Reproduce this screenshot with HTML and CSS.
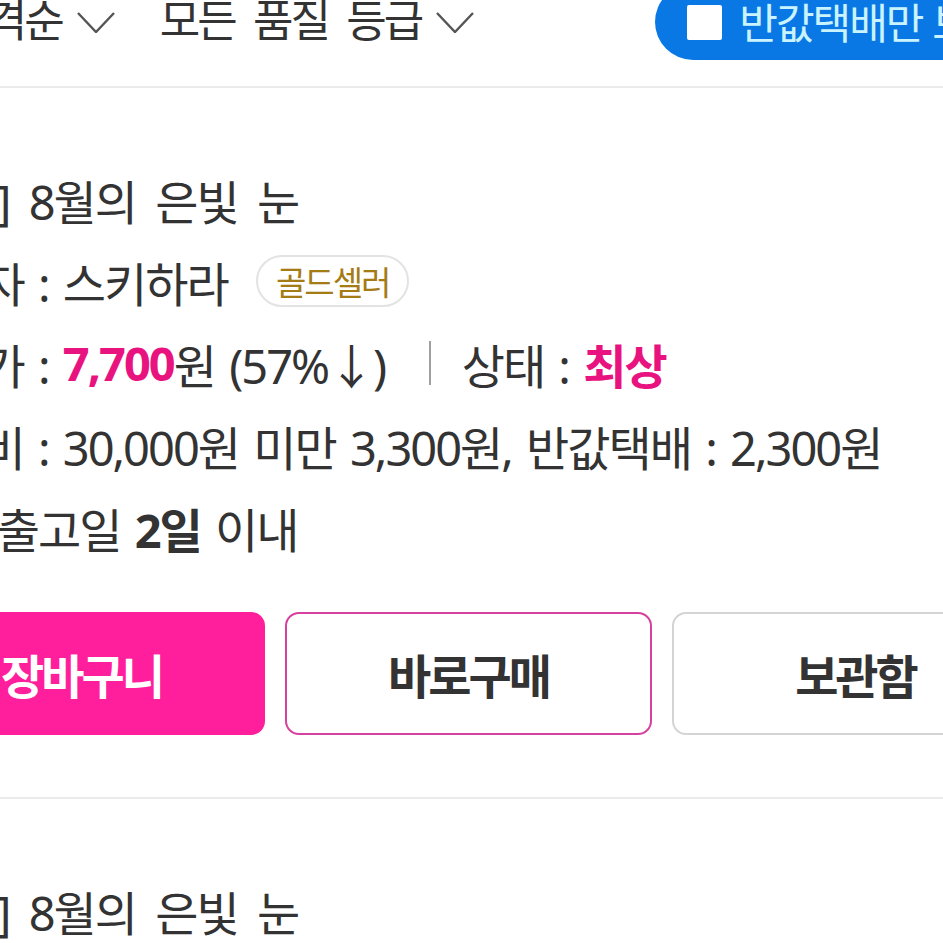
FILE: index.html
```html
<!DOCTYPE html>
<html lang="ko">
<head>
<meta charset="utf-8">
<title>중고 목록</title>
<link rel="stylesheet" href="styles.css">
</head>
<body>
<div class="screen">
  <div class="filters">
    <div class="sort">
      <span class="sort-label">낮은 가격순</span>
      <svg class="chev" viewBox="0 0 38 21" width="38" height="21"><polyline points="1,1 19,20 37,1" fill="none" stroke="#555" stroke-width="2.4"/></svg>
    </div>
    <div class="sort">
      <span class="sort-label">모든 품질 등급</span>
      <svg class="chev" viewBox="0 0 38 21" width="38" height="21"><polyline points="1,1 19,20 37,1" fill="none" stroke="#555" stroke-width="2.4"/></svg>
    </div>
    <div class="pill">
      <span class="check"></span>
      <span class="pill-label">반값택배만 보기</span>
    </div>
  </div>

  <section class="item">
    <div class="row title">[중고] 8월의 은빛 눈</div>
    <div class="row">판매자 : 스키하라 <span class="badge">골드셀러</span></div>
    <div class="row">판매가 : <b class="pink">7,700</b>원 (57%↓) <span class="sep"></span> 상태 : <b class="pink">최상</b></div>
    <div class="row">배송비 : 30,000원 미만 3,300원, 반값택배 : 2,300원</div>
    <div class="row">평균 출고일 <b>2일</b> 이내</div>
    <div class="actions">
      <button class="btn btn-cart">장바구니</button>
      <button class="btn btn-buy">바로구매</button>
      <button class="btn btn-keep">보관함</button>
    </div>
  </section>

  <section class="item">
    <div class="row title">[중고] 8월의 은빛 눈</div>
    <div class="row">판매자 : 스키하라 <span class="badge">골드셀러</span></div>
    <div class="row">판매가 : <b class="pink">7,700</b>원 (57%↓) <span class="sep"></span> 상태 : <b class="pink">최상</b></div>
  </section>
</div>
</body>
</html>
```

FILE: styles.css
```css
html, body {
  margin: 0;
  padding: 0;
  background: #fff;
}
body {
  width: 943px;
  height: 943px;
  overflow: hidden;
  font-family: "Noto Sans CJK KR", "Noto Sans", sans-serif;
  color: #333;
}
.screen {
  width: 943px;
}

/* filter bar (scrolled horizontally) */
.filters {
  display: flex;
  align-items: center;
  height: 76px;
  margin: -16px 0 0 -144px;
  padding-bottom: 26px;
  border-bottom: 2px solid #ebebeb;
  white-space: nowrap;
}
.sort {
  display: flex;
  align-items: center;
  gap: 15px;
  flex-shrink: 0;
  margin-right: 45px;
}
.sort-label {
  font-size: 44px;
  letter-spacing: -3px;
  word-spacing: 9px;
  margin-bottom: 8px;
  color: #333;
}
.chev {
  display: block;
}
.pill {
  flex-shrink: 0;
  display: flex;
  align-items: center;
  gap: 17px;
  height: 76px;
  margin-left: 136px;
  padding: 0 30px 0 32px;
  background: #0a78e4;
  border-radius: 38px;
}
.check {
  width: 35px;
  height: 35px;
  background: #fff;
  border-radius: 2px;
}
.pill-label {
  font-size: 42px;
  letter-spacing: -2px;
  margin-bottom: 4px;
  color: #c9f3ff;
}

/* list items */
.item {
  margin-left: -100px;
  padding: 70px 0 62px;
  border-bottom: 2px solid #ebebeb;
}
.row {
  display: flex;
  align-items: center;
  height: 82px;
  font-family: "Noto Sans", "Noto Sans CJK KR", sans-serif;
  font-stretch: 75%;
  font-size: 47px;
  letter-spacing: -2px;
  word-spacing: 4px;
  white-space: pre;
  color: #333;
}
.row.title {
  word-spacing: 9px;
}
.row b {
  font-weight: 700;
}
.pink {
  color: #e8137f;
}
.badge {
  display: inline-flex;
  align-items: center;
  height: 48px;
  margin-left: 14px;
  padding: 0 18px;
  border: 2px solid #e3e3e3;
  border-radius: 26px;
  font-size: 33px;
  letter-spacing: -2px;
  word-spacing: 0;
  color: #a47b14;
}
.sep {
  display: inline-block;
  width: 2px;
  height: 44px;
  margin: 0 16px 0 30px;
  background: #a0a0a0;
}

.actions {
  display: grid;
  grid-template-columns: 367px 367px 367px;
  gap: 20px;
  margin: 44px 0 0 -2px;
}
.btn {
  height: 123px;
  border-radius: 14px;
  font-family: "Noto Sans CJK KR", "Noto Sans", sans-serif;
  font-size: 47px;
  font-weight: 700;
  letter-spacing: -3px;
  background: #fff;
  color: #333;
  padding: 0;
}
.btn-cart {
  background: #ff1e9b;
  border: 2px solid #ff1e9b;
  color: #fff;
}
.btn-buy {
  border: 2px solid #d6409e;
}
.btn-keep {
  border: 2px solid #d4d4d4;
}
```
